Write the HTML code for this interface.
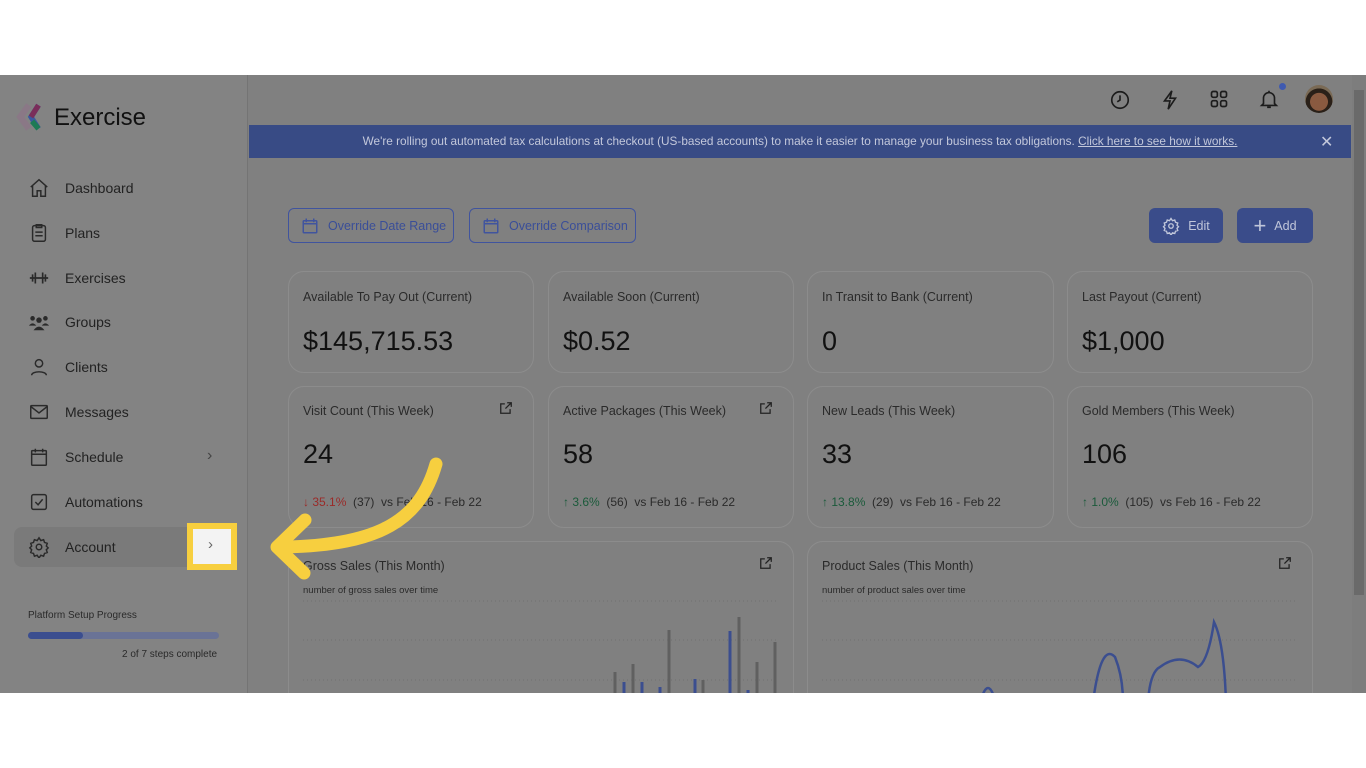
<!DOCTYPE html><html><head><meta charset="utf-8"><style>
*{box-sizing:border-box;margin:0;padding:0}
body{width:1366px;height:768px;background:#fff;font-family:"Liberation Sans",sans-serif;position:relative;overflow:hidden}
.app{position:absolute;left:0;top:75px;width:1366px;height:618px;background:#808080;overflow:hidden}
.side{position:absolute;left:0;top:0;width:248px;height:618px;background:#838383;border-right:1px solid #747474}
.nav{position:absolute;left:28px;font-size:14px;color:#222;display:flex;align-items:center}
.nav svg{width:22px;height:22px;margin-right:15px}
.ab{position:absolute;color:#1c1c1c}
.card{position:absolute;border:1px solid #8c8c8c;border-radius:16px;background:#808080}
.lbl{position:absolute;left:14px;font-size:12.5px;color:#2a2a2a}
.val{position:absolute;left:14px;font-size:27px;color:#111}
.cmp{position:absolute;left:14px;top:108px;font-size:12px;color:#2a2a2a}
.btn{position:absolute;border:1px solid #40549e;border-radius:6px;color:#3a4e98;font-size:12.5px;display:flex;align-items:center}
.sb{position:absolute;background:#3a4c8a;border-radius:6px;color:#c0c6da;font-size:12.5px;display:flex;align-items:center;justify-content:center;gap:8px}
.ext{position:absolute;right:20px;top:14px}
</style></head><body>
<div class="app">
<div class="side">
 <svg style="position:absolute;left:16px;top:28px" width="30" height="30" viewBox="0 0 28 28"><path d="M12 2L4 13l8 11" stroke="#8a7886" stroke-width="6" fill="none"/><path d="M21 2l-7 11 7 11" stroke="#3d58a0" stroke-width="5" fill="none"/><path d="M21 2l-7 11" stroke="#7a2d5a" stroke-width="5" fill="none"/><path d="M15 17l6 7" stroke="#1e7a55" stroke-width="5"/></svg>
 <div class="ab" style="left:54px;top:29px;font-size:24px;color:#111">Exercise</div>
 <div class="nav" style="top:102px"><svg viewBox="0 0 24 24" fill="none" stroke="#2a2a2a" stroke-width="1.6"><path d="M3 11l9-8 9 8M5 9v12h5v-6h4v6h5V9"/></svg>Dashboard</div>
 <div class="nav" style="top:147px"><svg viewBox="0 0 24 24" fill="none" stroke="#2a2a2a" stroke-width="1.6"><rect x="5" y="4" width="14" height="17" rx="2"/><path d="M9 3h6v3H9zM8 11h8M8 15h8"/></svg>Plans</div>
 <div class="nav" style="top:192px"><svg viewBox="0 0 24 24" fill="none" stroke="#2a2a2a" stroke-width="1.8"><path d="M2 12h20M5 8v8M8 6v12M16 6v12M19 8v8"/></svg>Exercises</div>
 <div class="nav" style="top:236px"><svg viewBox="0 0 24 24" fill="#2a2a2a"><circle cx="5" cy="8" r="2.5"/><circle cx="12" cy="10" r="3"/><circle cx="19" cy="8" r="2.5"/><path d="M1 16q4-5 8 0zM6 21q6-8 12 0zM15 16q4-5 8 0z"/></svg>Groups</div>
 <div class="nav" style="top:281px"><svg viewBox="0 0 24 24" fill="none" stroke="#2a2a2a" stroke-width="1.6"><circle cx="12" cy="8" r="4"/><path d="M4 21c0-5 16-5 16 0"/></svg>Clients</div>
 <div class="nav" style="top:326px"><svg viewBox="0 0 24 24" fill="none" stroke="#2a2a2a" stroke-width="1.6"><rect x="3" y="5" width="18" height="14" rx="1"/><path d="M3 6l9 7 9-7"/></svg>Messages</div>
 <div class="nav" style="top:371px"><svg viewBox="0 0 24 24" fill="none" stroke="#2a2a2a" stroke-width="1.6"><rect x="4" y="5" width="16" height="16" rx="1"/><path d="M4 9h16M8 3v4M16 3v4"/></svg>Schedule</div>
 <div class="ab" style="left:207px;top:372px;font-size:16px;color:#444">›</div>
 <div class="nav" style="top:416px"><svg viewBox="0 0 24 24" fill="none" stroke="#2a2a2a" stroke-width="1.6"><rect x="4" y="4" width="16" height="16" rx="2"/><path d="M8 12l3 3 5-6"/></svg>Automations</div>
 <div style="position:absolute;left:14px;top:452px;width:222px;height:40px;background:#7a7a7a;border-radius:8px"></div>
 <div class="nav" style="top:461px"><svg viewBox="0 0 24 24" fill="none" stroke="#2a2a2a" stroke-width="1.6"><circle cx="12" cy="12" r="3"/><path d="M12 2l2 3 3-1 1 3 3 1-1 3 2 2-2 2 1 3-3 1-1 3-3-1-2 3-2-3-3 1-1-3-3-1 1-3-2-2 2-2-1-3 3-1 1-3 3 1z"/></svg>Account</div>
 <div style="position:absolute;left:187px;top:448px;width:50px;height:47px;border:6px solid #f7cf3f;background:#f3f3f3"></div>
 <div class="ab" style="left:208px;top:461px;font-size:15px;color:#666">›</div>
 <div class="ab" style="left:28px;top:535px;font-size:10px;color:#2a2a2a">Platform Setup Progress</div>
 <div style="position:absolute;left:28px;top:557px;width:191px;height:7px;border-radius:4px;background:#6a7396"><div style="width:55px;height:7px;border-radius:4px;background:#3b4e8f"></div></div>
 <div class="ab" style="left:122px;top:574px;font-size:10px;color:#2a2a2a">2 of 7 steps complete</div>
</div>
<svg style="position:absolute;left:1109px;top:14px" width="22" height="22" viewBox="0 0 24 24" fill="none" stroke="#1c1c1c" stroke-width="1.8"><circle cx="12" cy="12" r="9"/><path d="M12 7v5l-3 2"/></svg>
<svg style="position:absolute;left:1159px;top:14px" width="22" height="22" viewBox="0 0 24 24" fill="none" stroke="#1c1c1c" stroke-width="1.8"><path d="M14 2L6 13h6l-2 9 8-12h-6z"/></svg>
<svg style="position:absolute;left:1209px;top:14px" width="20" height="20" viewBox="0 0 24 24" fill="none" stroke="#1c1c1c" stroke-width="2"><rect x="3" y="3" width="7" height="7" rx="2"/><rect x="14" y="3" width="7" height="7" rx="2"/><rect x="3" y="14" width="7" height="7" rx="2"/><rect x="14" y="14" width="7" height="7" rx="2"/></svg>
<svg style="position:absolute;left:1258px;top:13px" width="22" height="22" viewBox="0 0 24 24" fill="none" stroke="#1c1c1c" stroke-width="1.8"><path d="M6 17V11a6 6 0 0112 0v6l2 2H4zM10 21h4M12 3v2"/></svg>
<div style="position:absolute;left:1279px;top:8px;width:7px;height:7px;border-radius:50%;background:#3f5ab0"></div>
<div style="position:absolute;left:1305px;top:10px;width:28px;height:28px;border-radius:50%;background:radial-gradient(circle at 50% 60%,#8a5a40 0 40%,#2a2018 42% 60%,#7a6a55 62%)"></div>
<div style="position:absolute;left:1352px;top:0;width:14px;height:618px;background:#7d7d7d"></div>
<div style="position:absolute;left:1354px;top:15px;width:10px;height:505px;background:#6a6a6a"></div>
<div style="position:absolute;left:249px;top:50px;width:1102px;height:33px;background:#384b85;color:#c3c8db;font-size:11.8px;text-align:center;line-height:33px">We're rolling out automated tax calculations at checkout (US-based accounts) to make it easier to manage your business tax obligations. <u>Click here to see how it works.</u></div>
<div class="ab" style="left:1320px;top:57px;color:#c3c8db;font-size:16px">✕</div>
<div class="btn" style="left:288px;top:133px;width:166px;height:35px;padding-left:12px"><svg width="18" height="18" viewBox="0 0 24 24" fill="none" stroke="#40549e" stroke-width="2" style="margin-right:9px"><rect x="3" y="5" width="18" height="16" rx="1"/><path d="M3 9h18M7 2v5M17 2v5"/></svg>Override Date Range</div>
<div class="btn" style="left:469px;top:133px;width:167px;height:35px;padding-left:12px"><svg width="18" height="18" viewBox="0 0 24 24" fill="none" stroke="#40549e" stroke-width="2" style="margin-right:9px"><rect x="3" y="5" width="18" height="16" rx="1"/><path d="M3 9h18M7 2v5M17 2v5"/></svg>Override Comparison</div>
<div class="sb" style="left:1149px;top:133px;width:74px;height:35px"><svg width="18" height="18" viewBox="0 0 24 24" fill="none" stroke="#c0c6da" stroke-width="1.8"><circle cx="12" cy="12" r="3"/><path d="M12 2l2 3 3-1 1 3 3 1-1 3 2 2-2 2 1 3-3 1-1 3-3-1-2 3-2-3-3 1-1-3-3-1 1-3-2-2 2-2-1-3 3-1 1-3 3 1z"/></svg>Edit</div>
<div class="sb" style="left:1237px;top:133px;width:76px;height:35px"><span style="font-size:22px;font-weight:300">+</span>Add</div>
<div class="card" style="left:288px;top:196px;width:246px;height:102px"><div class="lbl" style="top:18px">Available To Pay Out (Current)</div><div class="val" style="top:54px">$145,715.53</div></div>
<div class="card" style="left:548px;top:196px;width:246px;height:102px"><div class="lbl" style="top:18px">Available Soon (Current)</div><div class="val" style="top:54px">$0.52</div></div>
<div class="card" style="left:807px;top:196px;width:247px;height:102px"><div class="lbl" style="top:18px">In Transit to Bank (Current)</div><div class="val" style="top:54px">0</div></div>
<div class="card" style="left:1067px;top:196px;width:246px;height:102px"><div class="lbl" style="top:18px">Last Payout (Current)</div><div class="val" style="top:54px">$1,000</div></div>
<div class="card" style="left:288px;top:311px;width:246px;height:142px"><div class="lbl" style="top:17px">Visit Count (This Week)</div><svg class="ext" width="14" height="14" viewBox="0 0 24 24" fill="none" stroke="#222" stroke-width="2.2"><path d="M14 3h7v7M21 3l-10 10M19 14v7H3V5h7"/></svg><div class="val" style="top:52px">24</div><div class="cmp"><span style="color:#9a2a28">↓ 35.1%</span> &nbsp;(37) &nbsp;vs Feb 16 - Feb 22</div></div>
<div class="card" style="left:548px;top:311px;width:246px;height:142px"><div class="lbl" style="top:17px">Active Packages (This Week)</div><svg class="ext" width="14" height="14" viewBox="0 0 24 24" fill="none" stroke="#222" stroke-width="2.2"><path d="M14 3h7v7M21 3l-10 10M19 14v7H3V5h7"/></svg><div class="val" style="top:52px">58</div><div class="cmp"><span style="color:#1a5a3a">↑ 3.6%</span> &nbsp;(56) &nbsp;vs Feb 16 - Feb 22</div></div>
<div class="card" style="left:807px;top:311px;width:247px;height:142px"><div class="lbl" style="top:17px">New Leads (This Week)</div><div class="val" style="top:52px">33</div><div class="cmp"><span style="color:#1a5a3a">↑ 13.8%</span> &nbsp;(29) &nbsp;vs Feb 16 - Feb 22</div></div>
<div class="card" style="left:1067px;top:311px;width:246px;height:142px"><div class="lbl" style="top:17px">Gold Members (This Week)</div><div class="val" style="top:52px">106</div><div class="cmp"><span style="color:#1a5a3a">↑ 1.0%</span> &nbsp;(105) &nbsp;vs Feb 16 - Feb 22</div></div>
<div class="card" style="left:288px;top:466px;width:506px;height:200px"><div class="lbl" style="top:17px">Gross Sales (This Month)</div><div class="ab" style="left:14px;top:43px;font-size:9.5px;color:#2a2a2a">number of gross sales over time</div><svg class="ext" width="14" height="14" viewBox="0 0 24 24" fill="none" stroke="#222" stroke-width="2.2"><path d="M14 3h7v7M21 3l-10 10M19 14v7H3V5h7"/></svg>
<svg style="position:absolute;left:0;top:0" width="506" height="200"><g stroke="#6f6f6f" stroke-dasharray="1 3"><line x1="14" y1="59" x2="490" y2="59"/><line x1="14" y1="98" x2="490" y2="98"/><line x1="14" y1="138" x2="490" y2="138"/></g><g stroke-width="3"><path d="M326 130v70M344 122v78M380 88v112M414 138v70M450 75v130M486 100v100M468 120v80" stroke="#606060"/><path d="M335 140v60M353 140v60M371 145v60M406 137v70M441 89v110M459 148v60" stroke="#3b4e8f"/></g></svg></div>
<div class="card" style="left:807px;top:466px;width:506px;height:200px"><div class="lbl" style="top:17px">Product Sales (This Month)</div><div class="ab" style="left:14px;top:43px;font-size:9.5px;color:#2a2a2a">number of product sales over time</div><svg class="ext" width="14" height="14" viewBox="0 0 24 24" fill="none" stroke="#222" stroke-width="2.2"><path d="M14 3h7v7M21 3l-10 10M19 14v7H3V5h7"/></svg>
<svg style="position:absolute;left:0;top:0" width="506" height="200"><g stroke="#6f6f6f" stroke-dasharray="1 3"><line x1="14" y1="59" x2="490" y2="59"/><line x1="14" y1="98" x2="490" y2="98"/><line x1="14" y1="138" x2="490" y2="138"/></g><path d="M175 152q5-12 10 0M285 160q8-60 22-45q8 20 8 45M340 160q2-30 12-35q20-15 38 0q10-5 16-45q10 20 12 80" fill="none" stroke="#3b4e8f" stroke-width="2.5"/></svg></div>
<svg style="position:absolute;left:0;top:0" width="1366" height="618"><g fill="none" stroke="#f7cf3f" stroke-width="13" stroke-linecap="round" stroke-linejoin="round"><path d="M436 389C420 445 380 470 285 472"/><path d="M305 445L277 472L304 498"/></g></svg>
</div>
</body></html>
